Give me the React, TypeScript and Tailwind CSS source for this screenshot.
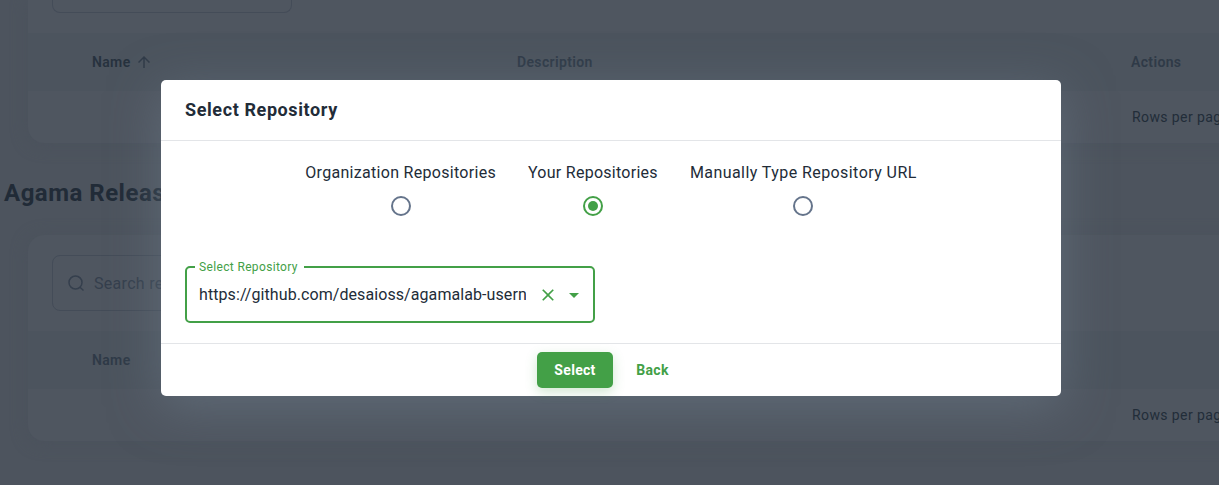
import React from "react";

function TableHead({ sorted = false }: { sorted?: boolean }) {
  return (
    <div className="flex h-[58px] items-center bg-[#4c545e] pl-16 text-[14px] font-semibold leading-none tracking-[0.35px] text-[#2f3a47]">
      <div className={sorted ? "flex w-[425px] items-center text-[#27323e]" : "flex w-[425px] items-center"}>
        <span>Name</span>
        {sorted && (
          <svg className="ml-1 h-[18px] w-[18px]" viewBox="0 0 24 24" fill="#303b48">
            <path d="M4 12l1.41 1.41L11 7.83V20h2V7.83l5.58 5.59L20 12l-8-8-8 8z" />
          </svg>
        )}
      </div>
      {sorted && <div className="w-[614px]">Description</div>}
      {sorted && <div>Actions</div>}
    </div>
  );
}

function TableFooter() {
  return (
    <div className="flex h-[52px] items-center justify-start pl-[1104px] text-[14px] tracking-[0.4px] text-[#222d39]">
      <span className="whitespace-nowrap">Rows per page:</span>
    </div>
  );
}

function RadioOption({ label, checked = false }: { label: React.ReactNode; checked?: boolean }) {
  return (
    <div className="flex flex-col items-center">
      <span className="whitespace-nowrap leading-6">{label}</span>
      <svg className={checked ? "mt-[9px] h-6 w-6 text-[#43a047]" : "mt-[9px] h-6 w-6 text-[#65748b]"} viewBox="0 0 24 24">
        <circle cx="12" cy="12" r="9" fill="none" stroke="currentColor" strokeWidth="2" />
        {checked && <circle cx="12" cy="12" r="5" fill="currentColor" />}
      </svg>
    </div>
  );
}

export default function App() {
  return (
    <div className="relative h-[485px] w-full overflow-hidden bg-[#4d545e] font-['Roboto',sans-serif] text-[#222c38]">
      <div className="flex w-[1400px] flex-col">
        <div className="ml-7 h-[143px] overflow-hidden rounded-b-[16px] bg-[#4f5660] shadow-[0_2px_16px_#4b525c]">
          <div className="h-[33px] pl-6">
            <div className="h-[13px] w-60 rounded-b-lg border border-t-0 border-[#444c58]" />
          </div>
          <TableHead sorted />
          <TableFooter />
        </div>
        <h2 className="ml-1 mt-8 h-9 text-[24px] font-bold leading-9 tracking-[0.5px] text-[#212b37]">Agama Release Dashboard</h2>
        <div className="ml-7 mt-6 h-[206px] overflow-hidden rounded-[16px] bg-[#4f5660] shadow-[0_2px_16px_#4b525c]">
          <div className="h-[96px] pl-6 pt-5">
            <div className="flex h-14 w-60 items-center rounded-lg border border-[#444c58] pl-[13px] text-[16px] text-[#353f4d]">
              <svg className="mr-2 h-5 w-5" viewBox="0 0 20 20" fill="none" stroke="#353f4d" strokeWidth="1.5">
                <circle cx="9.5" cy="9.5" r="6.5" />
                <path d="M14 14.2L17.5 17.5" />
              </svg>
              <span className="pt-px tracking-[0.3px]">Search repository</span>
            </div>
          </div>
          <TableHead />
          <TableFooter />
        </div>
      </div>

      <div className="absolute inset-0 flex items-start pl-[161px] pt-20">
        <div className="flex h-[316px] w-[900px] shrink-0 flex-col rounded-[5px] bg-white shadow-[0_11px_50px_rgba(110,124,138,0.55)]">
          <h1 className="flex h-[61px] items-center border-b border-[#e3e5e8] px-6 pb-px text-[18px] font-bold tracking-[0.6px]">Select Repository</h1>
          <div className="flex h-[203px] flex-col border-b border-[#e3e5e8] px-6 pt-5">
            <div className="flex justify-center gap-8 text-[16px]">
              <RadioOption label={<span className="tracking-[0.3px]">Organization Repositories</span>} />
              <RadioOption label={<span className="tracking-[0.27px]">Your Repositories</span>} checked />
              <RadioOption label={<span className="tracking-[0.43px]">Manually Type Repository URL</span>} />
            </div>
            <fieldset className="mt-[42px] h-[63px] w-[410px] rounded-[5px] border-2 border-[#43a047] pl-2 pr-1">
              <legend className="h-[14px] pl-1 pr-1.5 text-[12px] leading-[14px] tracking-[0.35px] text-[#43a047]">Select Repository</legend>
              <div className="flex h-[42px] items-center pl-1 text-[16px]">
                <span className="w-[327px] shrink-0 overflow-hidden whitespace-nowrap tracking-[0.08px]">https://github.com/desaioss/agamalab-username</span>
                <svg className="ml-[12px] h-5 w-5 shrink-0" viewBox="0 0 24 24" fill="#43a047">
                  <path d="M19 6.41L17.59 5 12 10.59 6.41 5 5 6.41 10.59 12 5 17.59 6.41 19 12 13.41 17.59 19 19 17.59 13.41 12z" />
                </svg>
                <svg className="ml-1 h-6 w-6 shrink-0" viewBox="0 0 24 24" fill="#43a047"><path d="M7 10l5 5 5-5z" /></svg>
              </div>
            </fieldset>
          </div>
          <div className="flex h-[52px] items-center pl-[376px] text-[14px] font-bold tracking-[0.3px]">
            <button className="h-9 w-[76px] rounded-[5px] bg-[#43a047] text-white shadow-[0_4px_12px_rgba(67,160,71,0.25)]">Select</button>
            <button className="ml-[15px] h-9 w-[49px] text-[#43a047]">Back</button>
          </div>
        </div>
      </div>
    </div>
  );
}
